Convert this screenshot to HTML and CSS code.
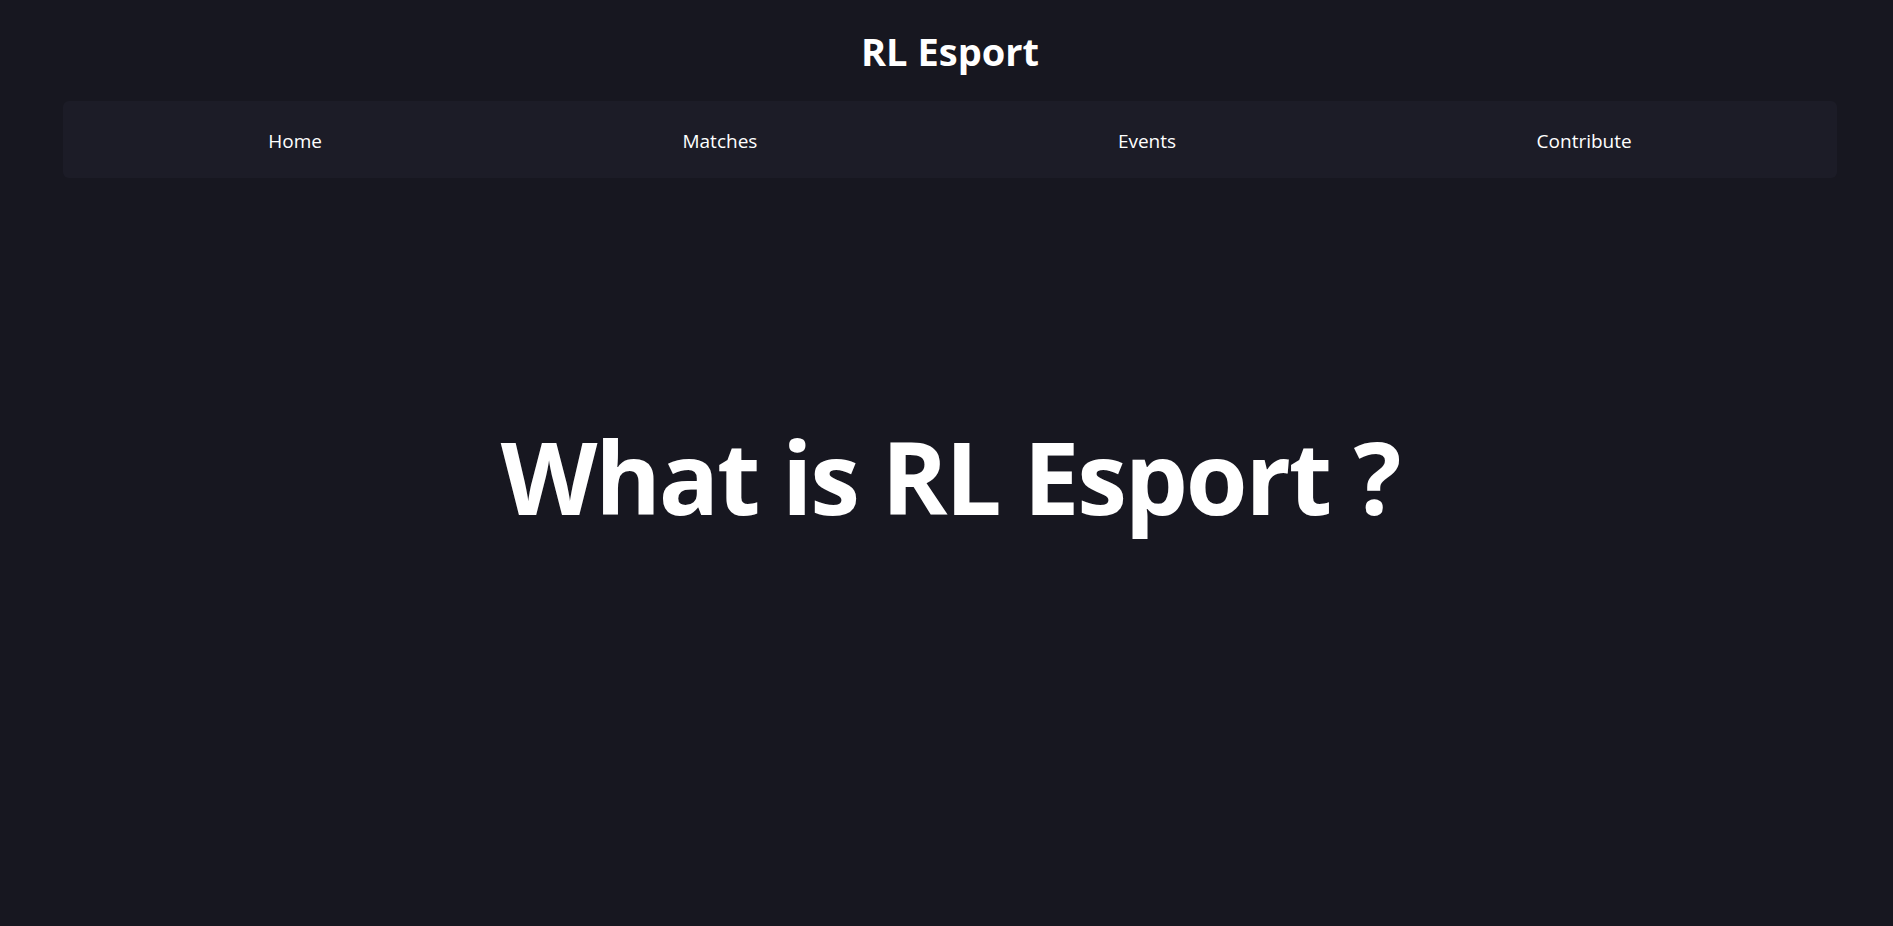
FILE: index.html
```html
<!DOCTYPE html>
<html lang="en">
<head>
<meta charset="utf-8">
<title>RL Esport</title>
<link rel="stylesheet" href="styles.css">
</head>
<body>
<div class="page">
  <header class="site-header">
    <h1 class="brand">RL Esport</h1>
    <nav class="nav">
      <a class="nav-link" href="#">Home</a>
      <a class="nav-link" href="#">Matches</a>
      <a class="nav-link" href="#">Events</a>
      <a class="nav-link" href="#">Contribute</a>
    </nav>
  </header>
  <main class="hero">
    <h2 class="hero-title">What is RL Esport ?</h2>
  </main>
</div>
</body>
</html>
```

FILE: styles.css
```css
html, body {
  margin: 0;
  padding: 0;
  height: 100%;
}
body {
  background: #171720;
  color: #ffffff;
  font-family: "Open Sans", "Noto Sans", sans-serif;
  overflow: hidden;
}
.page {
  padding: 0 56px 0 63px;
}
.site-header {
  display: flex;
  flex-direction: column;
}
.brand {
  margin: 0;
  padding-top: 26px;
  height: 101px;
  box-sizing: border-box;
  text-align: center;
  font-size: 38px;
  font-weight: 700;
  line-height: 50px;
}
.nav {
  display: flex;
  justify-content: space-around;
  align-items: center;
  height: 77px;
  box-sizing: border-box;
  padding: 2px 25px 0;
  background: #1c1c27;
  border-radius: 6px;
}
.nav-link {
  color: #ffffff;
  text-decoration: none;
  font-size: 19px;
}
.hero {
  display: flex;
  justify-content: center;
  padding-top: 248px;
}
.hero-title {
  margin: 0;
  font-size: 100px;
  font-weight: 700;
  line-height: 100px;
  letter-spacing: -2.2px;
}
```
